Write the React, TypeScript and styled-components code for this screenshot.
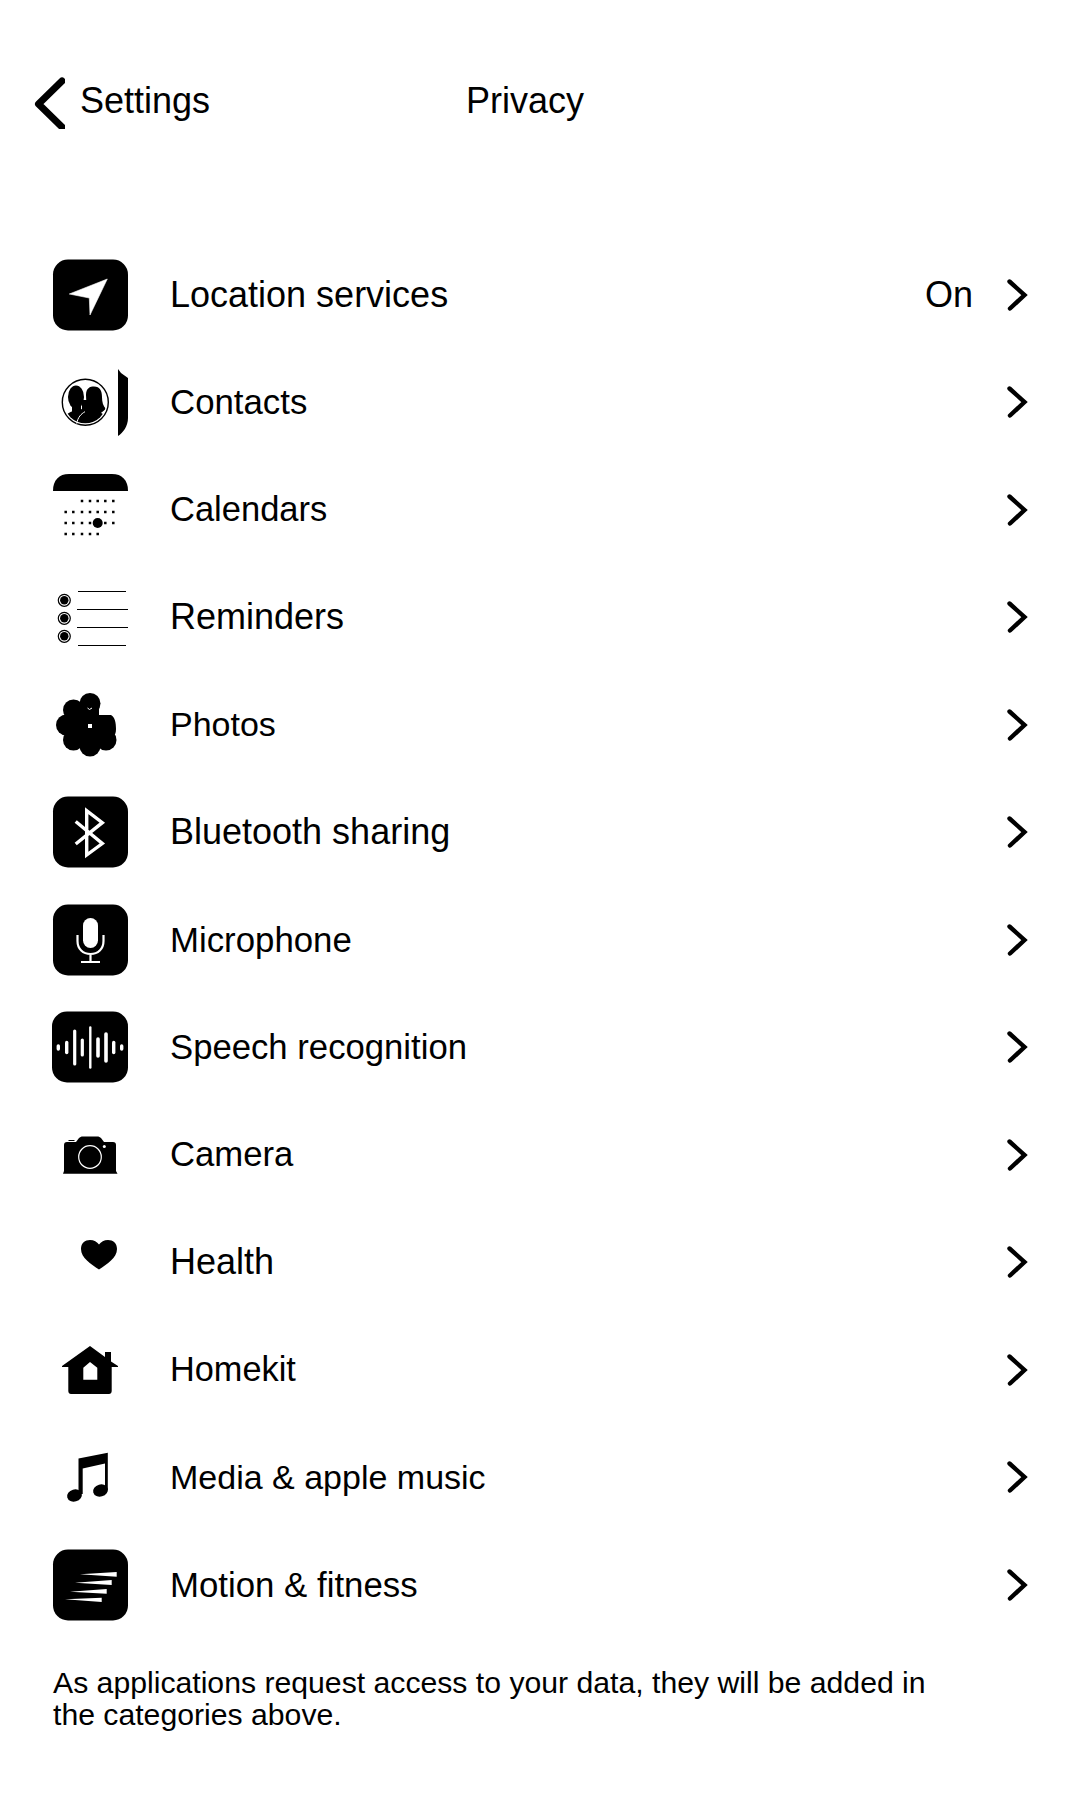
import type { ReactNode } from 'react';
import styled, { createGlobalStyle } from 'styled-components';

const GlobalStyle = createGlobalStyle`
  body {
    margin: 0;
    background: #fff;
    color: #000;
    font-family: "Liberation Sans", Arial, sans-serif;
  }
`;

const Page = styled.div`
  width: 1080px;
  min-height: 1800px;
  overflow: hidden;
`;

const Header = styled.header`
  display: grid;
  grid-template-columns: 433px auto;
  align-items: center;
  height: 48px;
  padding: 73px 0 0 33px;
  font-size: 36px;
`;

const BackLink = styled.div`
  display: flex;
  align-items: center;
  column-gap: 15px;
`;

const List = styled.ul`
  list-style: none;
  margin: 120px 0 0;
  padding: 0 51px 0 53px;
`;

const Row = styled.li<{ $size: number }>`
  display: flex;
  align-items: center;
  height: 107.5px;
  font-size: ${(props) => props.$size}px;
`;

const IconSlot = styled.span`
  display: block;
  flex: none;
  width: 75px;
  height: 72px;
  margin-right: 42px;

  svg {
    display: block;
    overflow: visible;
  }
`;

const Label = styled.span`
  flex: 1;
`;

const Value = styled.span`
  margin-right: 34px;
`;

const Footnote = styled.p`
  width: 890px;
  margin: 28px 0 0 53px;
  font-size: 30.2px;
  line-height: 32px;
`;

const Icon = ({ children }: { children: ReactNode }) => (
  <svg width="75" height="72" viewBox="0 0 75 72">
    {children}
  </svg>
);

const Tile = () => <rect x="0" y="0.5" width="75" height="71" rx="15" fill="#000" />;

const LocationIcon = () => (
  <Icon>
    <Tile />
    <path d="M16.3 35 L54.3 20 L37 56 L36.3 39 Z" fill="#fff" stroke="#fff" strokeWidth="0.6" strokeLinejoin="round" />
  </Icon>
);

const ContactsIcon = () => (
  <Icon>
    <clipPath id="contacts-clip">
      <circle cx="32.3" cy="36.3" r="21" />
    </clipPath>
    <circle cx="32.3" cy="36.3" r="23" fill="none" stroke="#000" strokeWidth="1.4" />
    <g clipPath="url(#contacts-clip)" fill="#000">
      <ellipse cx="23" cy="31" rx="8" ry="11.5" />
      <path d="M33 29 C33 22 37 20.5 41 20.5 C47 20.5 49 25 49 31 C49 36 50 40 53 43 L44 50 L35 46 C34 40 33 35 33 29 Z" />
      <ellipse cx="32" cy="61" rx="26" ry="18" />
      <rect x="19" y="38" width="9" height="10" />
      <rect x="29" y="34" width="6" height="14" />
    </g>
    <path d="M23.7 57.5 C25 51 28 48 32 45.7" fill="none" stroke="#fff" strokeWidth="1" />
    <path d="M65 3 L68 7 L75 12 L75 52 C75 60 70 67 65 70 Z" fill="#000" />
  </Icon>
);

const calendarDots: [number, number[]][] = [
  [27, [29, 37, 44.7, 52.3, 60.3]],
  [38, [12.7, 20.3, 29, 37, 44.7, 52.3, 60.3]],
  [49, [12.7, 20.3, 29, 37, 52.3, 60.3]],
  [60, [12.7, 20.3, 29, 37, 44.7]],
];

const CalendarIcon = () => (
  <Icon>
    <path d="M0 17 C0 6 6 0 16 0 L59 0 C69 0 75 6 75 17 Z" fill="#000" />
    {calendarDots.map(([y, xs]) =>
      xs.map((x) => <rect key={`${y}-${x}`} x={x - 1.25} y={y - 1.25} width="2.5" height="2.5" fill="#000" />),
    )}
    <circle cx="44.7" cy="49" r="5" fill="#000" />
  </Icon>
);

const RemindersIcon = () => (
  <Icon>
    <path d="M25 10.5 H73 M24 28.5 H75 M24 46.5 H75 M25 64.5 H73" stroke="#000" strokeWidth="1.2" />
    {[19.3, 37.3, 55.3].map((y) => (
      <g key={y}>
        <circle cx="11.3" cy={y} r="6" fill="none" stroke="#000" strokeWidth="1.2" />
        <circle cx="11.3" cy={y} r="4.2" fill="#000" />
      </g>
    ))}
  </Icon>
);

const petals = [
  [37, 14.5],
  [20.5, 21],
  [13.5, 36],
  [20.5, 51],
  [37, 57],
  [53, 51],
];

const PhotosIcon = () => (
  <Icon>
    {petals.map(([cx, cy]) => (
      <circle key={`${cx}-${cy}`} cx={cx} cy={cy} r="10.5" fill="#000" />
    ))}
    <path d="M28 14 H46 V26 H58 C62 28 63 34 63 40 C63 44 62 46 60 48 L30 56 L14 40 Z" fill="#000" />
    <rect x="35" y="35" width="4" height="4" fill="#fff" />
    <path d="M34.5 19 L36.5 20.5 L39 19" fill="none" stroke="#fff" strokeWidth="1" />
  </Icon>
);

const BluetoothIcon = () => (
  <Icon>
    <Tile />
    <path d="M22.7 25.5 L49.3 47.5 L33.7 59 V14.7 L49.3 26.7 L22.7 48" fill="none" stroke="#fff" strokeWidth="3.4" />
  </Icon>
);

const MicIcon = () => (
  <Icon>
    <Tile />
    <rect x="30" y="14" width="15" height="30" rx="7.5" fill="#fff" />
    <path d="M24.5 31 V37 C24.5 45 30 50 37.5 50 C45 50 50.5 45 50.5 37 V31 M37.5 50 V58 M28 58 H47" fill="none" stroke="#fff" strokeWidth="2.2" />
  </Icon>
);

const speechBars: [number, number, number][] = [
  [5.3, 1.5, 3.4],
  [13.7, 5, 3.4],
  [21.7, 16.5, 3.2],
  [29.3, 7.5, 3.2],
  [37.3, 20, 2.4],
  [45, 8.5, 3.6],
  [53, 13.5, 3.6],
  [60.7, 5, 3.4],
  [68.7, 1.5, 3.4],
];

const SpeechIcon = () => (
  <Icon>
    <rect x="-1" y="0.5" width="76" height="71" rx="15" fill="#000" />
    {speechBars.map(([x, half, width]) => (
      <line key={x} x1={x} x2={x} y1={36.5 - half} y2={36.5 + half} stroke="#fff" strokeWidth={width} strokeLinecap="round" />
    ))}
  </Icon>
);

const CameraIcon = () => (
  <Icon>
    <path d="M10 54.7 L11 52 V26 C11 24 12 23 14 23 H23 L26 19 C27 18 28 17.4 30 17.4 H44 C46 17.4 47 18 48 19 L51 23 H60 C62 23 63 24 63 26 V52 L64.5 54.7 Z" fill="#000" />
    <rect x="15.5" y="21" width="6" height="1" fill="#000" />
    <circle cx="37" cy="38" r="11.3" fill="none" stroke="#fff" strokeWidth="1.2" />
    <circle cx="51.3" cy="27.4" r="1.5" fill="#fff" />
  </Icon>
);

const HealthIcon = () => (
  <Icon>
    <path d="M46 43.5 C38 38 28 32 28 23 C28 17 32 14 37 14 C41 14 44 16 46 18.5 C48 16 51 14 55 14 C60 14 64 17 64 23 C64 32 54 38 46 43.5 Z" fill="#000" />
  </Icon>
);

const HomeIcon = () => (
  <Icon>
    <path
      fillRule="evenodd"
      d="M37 12 L52 23 V18 H58 V27.5 L65 32 V33 H58.7 V57 C58.7 59 57.5 60 56 60 H18 C16.5 60 15.3 59 15.3 57 V33 H9 V32 Z M37 28 L30.3 33.7 V45.7 H44.3 V33.7 Z"
      fill="#000"
    />
  </Icon>
);

const MusicIcon = () => (
  <Icon>
    <ellipse cx="21.5" cy="54.5" rx="7.5" ry="6" transform="rotate(-15 21.5 54.5)" fill="#000" />
    <ellipse cx="47.5" cy="49.5" rx="7.5" ry="6" transform="rotate(-15 47.5 49.5)" fill="#000" />
    <path d="M25.5 53 V17.5 L54.8 11.7 V49 H52 V22.5 L29.7 27.5 V53 Z" fill="#000" />
  </Icon>
);

const MotionIcon = () => (
  <Icon>
    <Tile />
    <path d="M27 25.3 L63.7 23 V27.7 Z M22 33.7 L58.7 31 V36 Z M17 42.7 L53.7 40 V44.7 Z M12 50.3 L48.7 48.7 V53 Z" fill="#fff" />
  </Icon>
);

const BackArrow = () => (
  <svg width="32" height="56" viewBox="0 0 32 56">
    <path d="M29 8 L5.5 31 L29 54" fill="none" stroke="#000" strokeWidth="7" strokeLinecap="round" strokeLinejoin="round" />
  </svg>
);

const Chevron = () => (
  <svg width="22" height="32" viewBox="0 0 22 32">
    <path d="M2.5 2.5 L17.5 16 L3 29.5" fill="none" stroke="#000" strokeWidth="4.4" strokeLinecap="round" strokeLinejoin="miter" />
  </svg>
);

const rows = [
  { label: 'Location services', size: 36, icon: <LocationIcon />, value: 'On' },
  { label: 'Contacts', size: 34.8, icon: <ContactsIcon /> },
  { label: 'Calendars', size: 34.5, icon: <CalendarIcon /> },
  { label: 'Reminders', size: 36, icon: <RemindersIcon /> },
  { label: 'Photos', size: 34, icon: <PhotosIcon /> },
  { label: 'Bluetooth sharing', size: 36, icon: <BluetoothIcon /> },
  { label: 'Microphone', size: 34.8, icon: <MicIcon /> },
  { label: 'Speech recognition', size: 34.7, icon: <SpeechIcon /> },
  { label: 'Camera', size: 34.7, icon: <CameraIcon /> },
  { label: 'Health', size: 36, icon: <HealthIcon /> },
  { label: 'Homekit', size: 34.3, icon: <HomeIcon /> },
  { label: 'Media & apple music', size: 34, icon: <MusicIcon /> },
  { label: 'Motion & fitness', size: 34.8, icon: <MotionIcon /> },
];

const App = () => {
  return (
    <Page>
      <GlobalStyle />
      <Header>
        <BackLink>
          <BackArrow />
          <span>Settings</span>
        </BackLink>
        <span>Privacy</span>
      </Header>
      <List>
        {rows.map((row) => (
          <Row key={row.label} $size={row.size}>
            <IconSlot>{row.icon}</IconSlot>
            <Label>{row.label}</Label>
            {row.value && <Value>{row.value}</Value>}
            <Chevron />
          </Row>
        ))}
      </List>
      <Footnote>As applications request access to your data, they will be added in the categories above.</Footnote>
    </Page>
  );
};

export default App;
